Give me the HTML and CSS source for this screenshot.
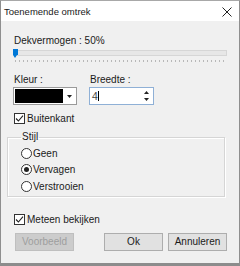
FILE: index.html
```html
<!DOCTYPE html>
<html>
<head>
    <title>Toenemende omtrek</title>
    <link rel="stylesheet" href="styles.css">
</head>
<body>
    <div class="window">
        <div class="titlebar">
            <span class="title">Toenemende omtrek</span>
            <svg class="close" width="10" height="10" viewBox="0 0 10 10">
                <path d="M0.5 0.5 L9.5 9.5 M9.5 0.5 L0.5 9.5" stroke="#222" stroke-width="1"/>
            </svg>
        </div>
        <div class="content">
            <div class="label">Dekvermogen : 50%</div>
            <div class="slider">
                <div class="track"></div>
                <div class="thumb"></div>
                <div class="ticks"></div>
            </div>

            <div class="row">
                <div class="field">
                    <div class="label">Kleur :</div>
                    <div class="combo">
                        <div class="swatch"></div>
                        <div class="drop">
                            <svg width="5" height="3" viewBox="0 0 5 3"><path d="M0 0 H5 L2.5 3 Z" fill="#222"/></svg>
                        </div>
                    </div>
                </div>
                <div class="field width-field">
                    <div class="label">Breedte :</div>
                    <div class="spin">
                        <div class="spin-value">4<span class="caret"></span></div>
                        <div class="spin-buttons">
                            <div class="spin-btn"><svg width="5" height="3" viewBox="0 0 5 3"><path d="M0 3 H5 L2.5 0 Z" fill="#222"/></svg></div>
                            <div class="spin-btn"><svg width="5" height="3" viewBox="0 0 5 3"><path d="M0 0 H5 L2.5 3 Z" fill="#222"/></svg></div>
                        </div>
                    </div>
                </div>
            </div>

            <div class="check outer-check">
                <span class="box"><svg width="9" height="9" viewBox="0 0 9 9"><path d="M1 4.5 L3.4 7 L8 1.6" fill="none" stroke="#222" stroke-width="1.1"/></svg></span>
                Buitenkant
            </div>

            <fieldset class="group">
                <legend>Stijl</legend>
                <div class="radio"><span class="circle"></span>Geen</div>
                <div class="radio"><span class="circle on"></span>Vervagen</div>
                <div class="radio"><span class="circle"></span>Verstrooien</div>
            </fieldset>

            <div class="check live-check">
                <span class="box"><svg width="9" height="9" viewBox="0 0 9 9"><path d="M1 4.5 L3.4 7 L8 1.6" fill="none" stroke="#222" stroke-width="1.1"/></svg></span>
                Meteen bekijken
            </div>

            <div class="buttons">
                <button class="btn" disabled>Voorbeeld</button>
                <div class="spacer"></div>
                <button class="btn">Ok</button>
                <button class="btn">Annuleren</button>
            </div>
        </div>
    </div>
</body>
</html>
```

FILE: styles.css
```css
body {
    margin: 0;
    font-family: "Liberation Sans", Arial, sans-serif;
    font-size: 10px;
    color: #1a1a1a;
    background: #f0f0f0;
}
.window {
    width: 240px;
    height: 266px;
    box-sizing: border-box;
    border: 1px solid #8f8f8f;
    border-top-color: #a8a8a8;
    border-bottom: 3px solid #8c8c8c;
    background: #f0f0f0;
    display: flex;
    flex-direction: column;
}
.titlebar {
    height: 20px;
    flex: none;
    background: #ffffff;
    display: flex;
    align-items: center;
    justify-content: space-between;
    padding: 0 7px 0 3px;
}
.title {
    font-size: 9.5px;
    line-height: 12px;
    margin-top: 1px;
}
.close {
    display: block;
    margin-top: 1px;
}
.content {
    padding: 14px 12px 0 13px;
    display: flex;
    flex-direction: column;
}
.label {
    line-height: 12px;
}
.slider {
    position: relative;
    height: 16px;
}
.track {
    margin-top: 3px;
    width: 213px;
    height: 6px;
    box-sizing: border-box;
    background: #e7e7e7;
    border: 1px solid #d6d6d6;
}
.thumb {
    position: absolute;
    left: -1px;
    top: 2px;
    width: 5px;
    height: 6px;
    background: #0078d7;
}
.thumb::after {
    content: "";
    position: absolute;
    left: 0;
    top: 6px;
    border-left: 2.5px solid transparent;
    border-right: 2.5px solid transparent;
    border-top: 3px solid #0078d7;
}
.ticks {
    margin: 4px 0 0 1px;
    width: 212px;
    height: 2px;
    background: repeating-linear-gradient(to right, #b8b8b8 0 1px, transparent 1px 4px);
}
.row {
    display: flex;
    margin-top: 11px;
}
.field .label {
    margin-bottom: 1px;
}
.field:first-child .combo {
    margin-left: -1px;
}
.width-field {
    margin-left: 13px;
}
.combo {
    width: 64px;
    height: 18px;
    box-sizing: border-box;
    border: 1px solid #9a9a9a;
    background: #fff;
    display: flex;
    padding: 1px;
}
.swatch {
    flex: 1;
    background: #000;
}
.drop {
    width: 12px;
    display: flex;
    align-items: center;
    justify-content: center;
}
.spin {
    width: 65px;
    height: 18px;
    margin-left: -1px;
    box-sizing: border-box;
    border: 1px solid #8fb0d6;
    background: #fff;
    display: flex;
}
.spin-value {
    flex: 1;
    padding-left: 2px;
    font-size: 10.5px;
    color: #444;
    display: flex;
    align-items: center;
}
.caret {
    display: inline-block;
    width: 1px;
    height: 10px;
    background: #000;
    margin-left: 0;
}
.spin-buttons {
    width: 11px;
    margin: 1px 1px 1px 0;
    display: flex;
    flex-direction: column;
}
.spin-btn {
    flex: 1;
    display: flex;
    align-items: center;
    justify-content: center;
}
.check {
    display: flex;
    align-items: center;
    height: 11px;
}
.box {
    width: 9px;
    height: 9px;
    border: 1px solid #333;
    background: #fff;
    margin-right: 2px;
    display: block;
}
.box svg {
    display: block;
}
.outer-check {
    margin-top: 8px;
}
.group {
    margin: 7px 0 0 -7px;
    width: 218px;
    box-sizing: border-box;
    border: 1px solid #d5d5d5;
    box-shadow: inset 1px 1px 0 #fff, 1px 1px 0 #fff;
    padding: 2px 0 1px 13px;
    min-width: 0;
}
.group legend {
    padding: 0 1px;
    margin-left: 0;
    line-height: 12px;
}
.radio {
    display: flex;
    align-items: center;
    height: 16px;
    margin-bottom: 0.5px;
}
.circle {
    width: 9px;
    height: 9px;
    border: 1px solid #333;
    border-radius: 50%;
    background: #fff;
    margin-right: 1px;
    position: relative;
}
.circle.on::after {
    content: "";
    position: absolute;
    left: 2px;
    top: 2px;
    width: 5px;
    height: 5px;
    border-radius: 50%;
    background: #222;
}
.live-check {
    margin-top: 17px;
}
.buttons {
    display: flex;
    margin-top: 8px;
    margin-left: 1px;
}
.spacer {
    flex: 1;
}
.btn {
    width: 59px;
    height: 18px;
    box-sizing: border-box;
    border: 1px solid #adadad;
    background: #e1e1e1;
    font-family: inherit;
    font-size: 10px;
    color: #1a1a1a;
    padding: 0;
    line-height: 16px;
}
.btn + .btn {
    margin-left: 5px;
}
.btn:disabled {
    background: #cccccc;
    border-color: #bfbfbf;
    color: #9e9e9e;
}
```
